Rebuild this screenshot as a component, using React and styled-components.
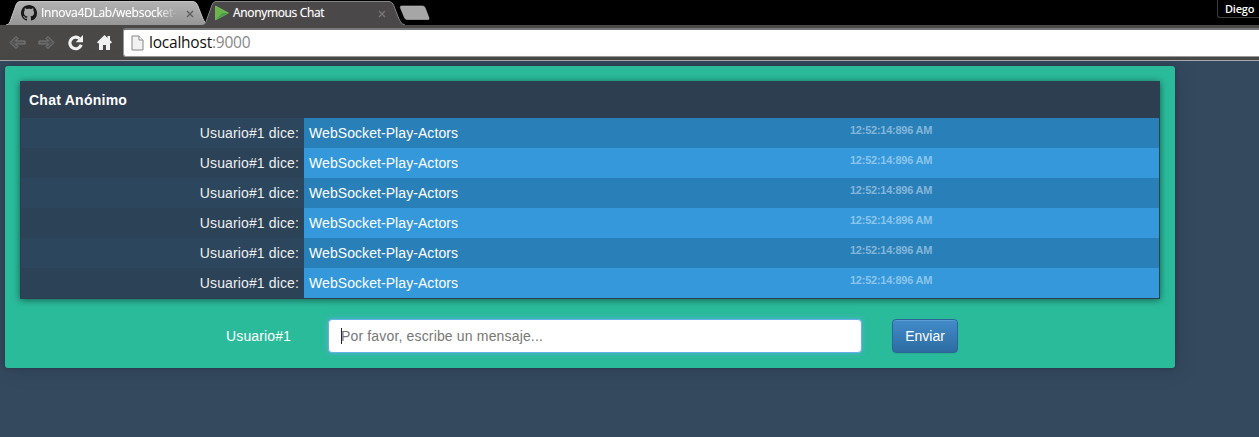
import React from 'react';
import styled, { createGlobalStyle } from 'styled-components';

const Global = createGlobalStyle`
  * { box-sizing: border-box; }
  html, body, #root { height: 100%; }
  body {
    margin: 0;
    overflow: hidden;
    background: #34495e;
    font: 14px/20px "Liberation Sans", Arial, sans-serif;
    color: #fff;
  }
`;

const chromeFont = '"Open Sans", "Noto Sans", sans-serif';

const Window = styled.div`
  height: 437px;
  display: flex;
  flex-direction: column;
`;

const TabStrip = styled.div`
  height: 25px;
  flex: none;
  display: flex;
  background: #000;
  padding-left: 6px;
`;

const Tab = styled.div`
  position: relative;
  width: ${(p) => (p.$active ? 202 : 204)}px;
  height: 25px;
  flex: none;
  display: flex;
  align-items: center;
  padding-left: ${(p) => (p.$active ? 12 : 15)}px;
  margin-left: ${(p) => (p.$active ? '-8px' : 0)};
  z-index: ${(p) => (p.$active ? 1 : 0)};
`;

const TabShape = styled.svg`
  position: absolute;
  inset: 0;
  z-index: -1;
`;

const Favicon = styled.svg`
  flex: none;
  display: block;
  margin-top: 1px;
`;

const TabTitle = styled.span`
  width: ${(p) => p.$width}px;
  margin-left: ${(p) => p.$gap}px;
  white-space: nowrap;
  font: 12px/18px ${chromeFont};
  letter-spacing: ${(p) => p.$spacing}px;
  color: #fff;
  text-shadow: 0 0 1px rgba(255, 255, 255, 0.5);
  mask-image: ${(p) => (p.$fade ? 'linear-gradient(90deg, #000 84%, transparent)' : 'none')};
`;

const TabClose = styled.svg`
  flex: none;
  margin: 2px 0 0 ${(p) => p.$gap}px;
`;

const NewTab = styled.svg`
  margin: 5px 0 0 -5px;
`;

const Profile = styled.div`
  width: 42px;
  height: 18px;
  margin-left: auto;
  padding-left: 7px;
  border: 1px solid #3c3c3c;
  border-width: 0 0 1px 1px;
  border-radius: 0 0 0 3px;
  font: 600 11px/18px ${chromeFont};
  letter-spacing: -0.2px;
`;

const Toolbar = styled.div`
  height: 36px;
  flex: none;
  display: flex;
  align-items: flex-start;
  padding: 3px 0 0 9px;
  background: #4a4847;
  border-bottom: 1px solid #a9a9a9;
`;

const NavIcon = styled.svg`
  flex: none;
  margin: 6px ${(p) => p.$gap}px 0 0;
`;

const AddressBar = styled.div`
  flex: 1;
  height: 29px;
  display: flex;
  align-items: center;
  padding-left: 7px;
  background: #fff;
  border: 1px solid #999;
  border-top: 2px solid #77797a;
  border-right: 0;
  border-radius: 3px 0 0 3px;
  color: #111;
  font: 15.5px/24px ${chromeFont};
  letter-spacing: -0.22px;
`;

const Url = styled.span`
  margin: -2px 0 0 5px;
`;

const Port = styled.span`
  color: #888;
`;

const Page = styled.main`
  flex: 1;
  padding: 5px 84px 0 5px;
  background: #34495e;
`;

const ChatPanel = styled.section`
  height: 302px;
  padding: 15px;
  background: #2abb9b;
  border-radius: 3px;
  box-shadow: 0 0 5px rgba(0, 0, 0, 0.22), 3px 3px 22px rgba(0, 0, 0, 0.1);
`;

const Board = styled.div`
  height: 218px;
  border: 1px solid #2c3e50;
  background: #2c3e50;
  box-shadow: 0 1px 7px rgba(0, 0, 0, 0.5);
`;

const BoardTitle = styled.h1`
  height: 36px;
  margin: 0;
  padding-left: 8px;
  font-size: 14px;
  line-height: 37px;
  font-weight: bold;
  letter-spacing: 0.25px;
  color: #fff;
`;

const Message = styled.div`
  display: flex;
  height: 30px;
  line-height: 30px;
`;

const Sender = styled.div`
  width: 283px;
  padding-right: 5px;
  text-align: right;
  letter-spacing: 0.13px;
  color: #ecf0f1;
  background: ${(p) => (p.$light ? '#2c465d' : '#2c4257')};
`;

const Body = styled.div`
  flex: 1;
  display: flex;
  padding-left: 5px;
  background: ${(p) => (p.$light ? '#3498db' : '#2980b9')};
`;

const Text = styled.span`
  width: 541px;
  letter-spacing: 0.07px;
`;

const Time = styled.time`
  font-size: 11px;
  line-height: 24px;
  font-weight: bold;
  letter-spacing: -0.25px;
  color: ${(p) => (p.$light ? '#8cc5ec' : '#85b6d9')};
`;

const Composer = styled.form`
  display: flex;
  height: 34px;
  margin: 20px 0 0;
`;

const UserLabel = styled.label`
  width: 271px;
  margin-right: 37px;
  text-align: right;
  line-height: 34px;
  letter-spacing: 0.12px;
`;

const MessageField = styled.div`
  width: 534px;
  height: 34px;
  display: flex;
  align-items: center;
  padding-left: 12px;
  background: #fff;
  border: 1px solid #66afe9;
  border-radius: 4px;
  box-shadow: 0 0 6px rgba(102, 175, 233, 0.65);
  color: #777;
  letter-spacing: 0.16px;
`;

const Caret = styled.i`
  width: 1px;
  height: 16px;
  margin-right: -1px;
  background: #222;
`;

const SendButton = styled.button`
  width: 66px;
  height: 34px;
  margin-left: 30px;
  padding: 0;
  border: 1px solid #2b669a;
  border-radius: 4px;
  background: linear-gradient(#428bca, #2d6ca2);
  box-shadow: inset 0 1px 0 rgba(255, 255, 255, 0.15), 0 1px 1px rgba(0, 0, 0, 0.075);
  color: #fff;
  font: inherit;
`;

const times = Array.from({ length: 6 }, () => '12:52:14:896 AM');

function TabBackdrop({ active }) {
  return (
    <TabShape width="204" height="25" viewBox="0 0 204 25">
      <defs>
        <linearGradient id="idleTab" x2="0" y2="1">
          <stop stopColor="#b2b2b2" />
          <stop offset="1" stopColor="#969696" />
        </linearGradient>
      </defs>
      <path
        d="M0 25C3 25 4 22 5 19L10 5Q11 1.5 14 1.5H187Q190 1.5 191.500 5L197 19Q199 25 203 25Z"
        fill={active ? '#4a4848' : 'url(#idleTab)'}
      />
      <path
        d="M0 25C3 25 4 22 5 19L10 5Q11 1.5 14 1.5H187Q190 1.5 191.500 5L197 19Q199 25 203 25"
        fill="none"
        stroke={active ? '#858585' : '#c4c4c4'}
      />
    </TabShape>
  );
}

function Close({ gap, color }) {
  return (
    <TabClose $gap={gap} width="8" height="8" viewBox="0 0 8 8">
      <path d="M1 1l6 6M7 1L1 7" stroke={color} strokeWidth="1.4" />
    </TabClose>
  );
}

export default function App() {
  return (
    <Window>
      <Global />
      <TabStrip>
        <Tab>
          <TabBackdrop />
          <Favicon width="16" height="16" viewBox="0 0 16 16">
            <path
              fill="#191717"
              d="M8 0C3.58 0 0 3.58 0 8c0 3.54 2.29 6.53 5.47 7.59.4.07.55-.17.55-.38 0-.19-.01-.82-.01-1.490-2.010.37-2.530-.49-2.690-.94-.09-.23-.48-.94-.82-1.130-.28-.15-.68-.52-.01-.53.63-.01 1.080.58 1.230.82.72 1.210 1.870.87 2.330.66.07-.52.28-.87.51-1.070-1.780-.2-3.640-.89-3.640-3.950 0-.87.31-1.590.82-2.150-.08-.2-.36-1.020.08-2.120 0 0 .67-.21 2.200.82.64-.18 1.320-.27 2-.27s1.360.09 2 .27c1.530-1.040 2.200-.82 2.200-.82.44 1.100.16 1.920.08 2.120.51.56.82 1.270.82 2.150 0 3.070-1.870 3.750-3.650 3.950.29.25.54.73.54 1.480 0 1.070-.01 1.930-.01 2.200 0 .21.15.46.55.38A8.010 8.010 0 0 0 16 8c0-4.420-3.580-8-8-8Z"
            />
          </Favicon>
          <TabTitle $gap={4} $width={138} $spacing={-0.26} $fade>
            Innova4DLab/websocket-
          </TabTitle>
          <Close gap={7} color="#5e5e5e" />
        </Tab>
        <Tab $active>
          <TabBackdrop active />
          <Favicon width="16" height="16" viewBox="0 0 16 16">
            <path d="M1.500 1L14.500 8L1.500 15Z" fill="#69b548" stroke="#8cc97c" strokeWidth=".6" />
            <path d="M1.500 15L14.500 8L8 8Z" fill="#4b9c47" />
          </Favicon>
          <TabTitle $gap={3} $width={138} $spacing={-0.33}>
            Anonymous Chat
          </TabTitle>
          <Close gap={7} color="#777" />
        </Tab>
        <NewTab width="32" height="16" viewBox="0 0 32 16">
          <path
            d="M2.500 1H23.500Q25.500 1 26.200 3L30 13Q30.500 14.500 29 14.500H8Q6.200 14.500 5.500 12.800L1.300 2.500Q.8 1 2.500 1Z"
            fill="#a6a6a6"
            stroke="#b8b8b8"
            strokeWidth=".6"
          />
        </NewTab>
        <Profile>Diego</Profile>
      </TabStrip>

      <Toolbar>
        <NavIcon $gap={12} width="17" height="17" viewBox="0 0 17 17">
          <path
            d="M1 8.500L7 2.500L9 4.500L6.500 7H16V10H6.500L9 12.500L7 14.500Z"
            fill="#555"
            stroke="#7c7c7c"
          />
        </NavIcon>
        <NavIcon $gap={12} width="17" height="17" viewBox="0 0 17 17">
          <path
            d="M16 8.500L10 2.500L8 4.500L10.500 7H1V10H10.500L8 12.500L10 14.500Z"
            fill="#555"
            stroke="#7c7c7c"
          />
        </NavIcon>
        <NavIcon $gap={12} width="17" height="17" viewBox="0 0 17 17">
          <path d="M12.500 4.600A5.800 5.800 0 1 0 14.200 10.800" fill="none" stroke="#f1f1f1" strokeWidth="3.100" />
          <path d="M16 1V8.300H8.700Z" fill="#f1f1f1" />
        </NavIcon>
        <NavIcon $gap={10} width="17" height="17" viewBox="0 0 17 17">
          <path
            d="M8.500 1L1 8.300L2.200 9.500L3 9V16H7V11H10V16H14V9L14.800 9.500L16 8.300L14 6.300V2H11.500V4Z"
            fill="#f1f1f1"
          />
        </NavIcon>
        <AddressBar>
          <svg width="13" height="16" viewBox="0 0 13 16">
            <path d="M1 1H8L12 5V15H1Z" fill="#f2f2f2" stroke="#858585" />
            <path d="M8 1V5H12" fill="#fff" stroke="#858585" />
          </svg>
          <Url>
            localhost<Port>:9000</Port>
          </Url>
        </AddressBar>
      </Toolbar>

      <Page>
        <ChatPanel>
          <Board>
            <BoardTitle>Chat Anónimo</BoardTitle>
            {times.map((time, i) => (
              <Message key={i}>
                <Sender $light={i % 2 === 0}>Usuario#1 dice:</Sender>
                <Body $light={i % 2 === 1}>
                  <Text>WebSocket-Play-Actors</Text>
                  <Time $light={i % 2 === 1}>{time}</Time>
                </Body>
              </Message>
            ))}
          </Board>
          <Composer>
            <UserLabel>Usuario#1</UserLabel>
            <MessageField>
              <Caret />
              Por favor, escribe un mensaje...
            </MessageField>
            <SendButton type="button">Enviar</SendButton>
          </Composer>
        </ChatPanel>
      </Page>
    </Window>
  );
}
